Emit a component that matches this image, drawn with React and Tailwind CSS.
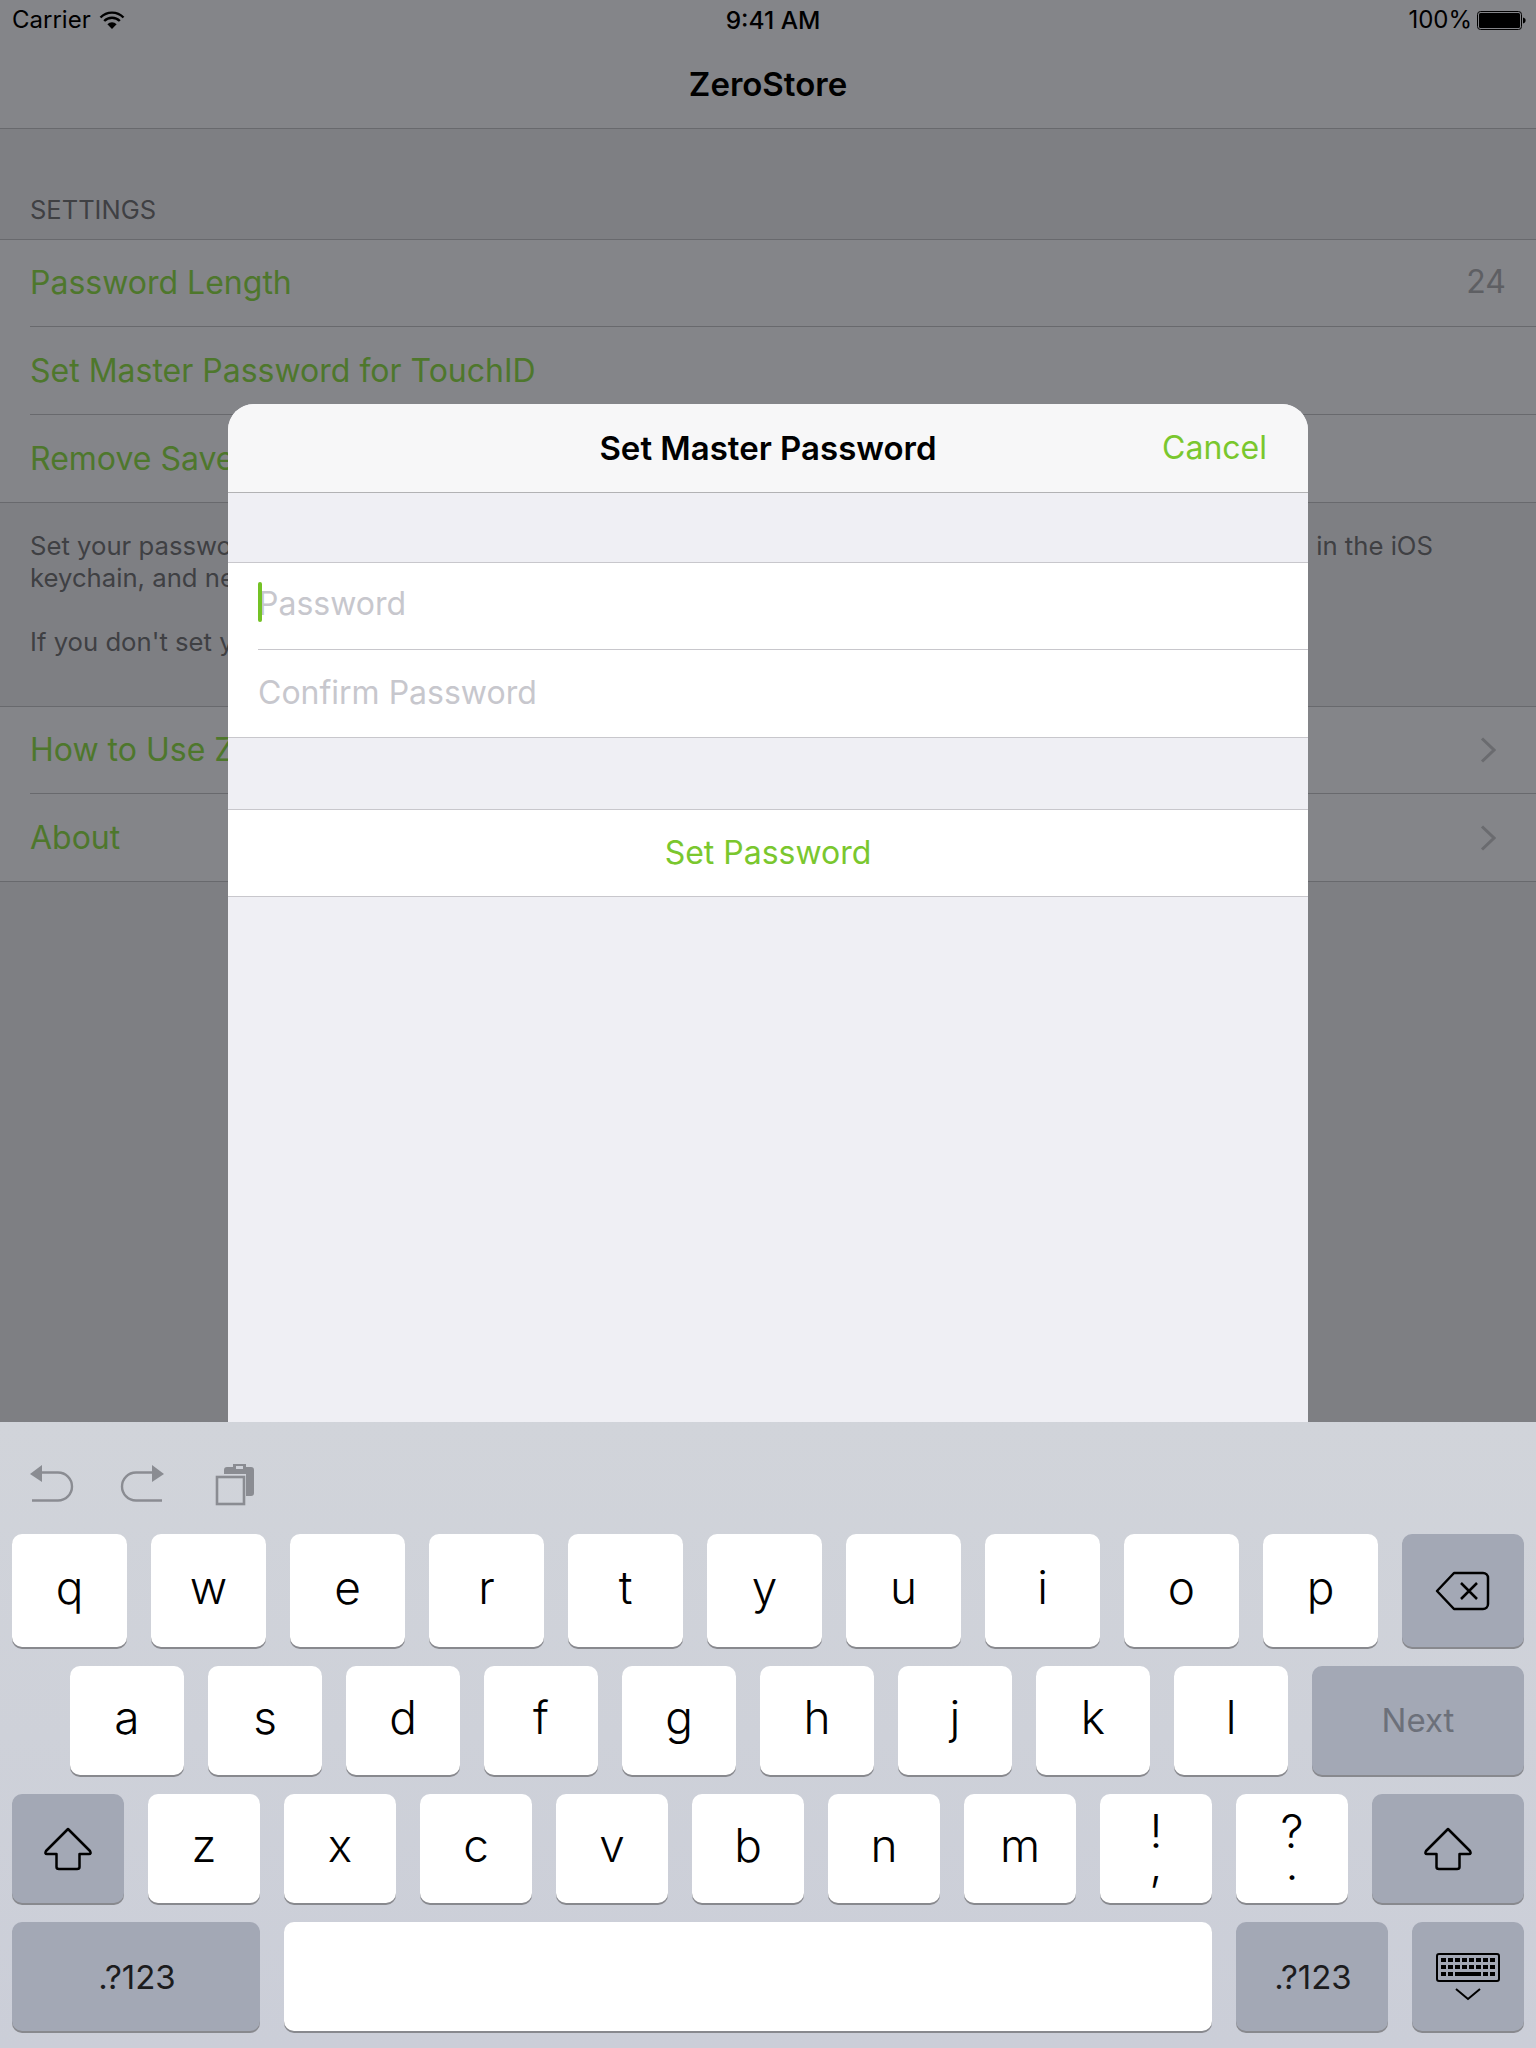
import React from "react";

const font = { fontFamily: "Inter, sans-serif" };

function Wifi() {
  return (
    <svg width="26" height="18" viewBox="0 0 26 18" fill="none" stroke="#000">
      <path d="M1.5 6.5A16 16 0 0 1 24.5 6.5" strokeWidth="2.4" />
      <path d="M5.2 10A11 11 0 0 1 20.8 10" strokeWidth="2.4" />
      <path d="M13 18L8.4 13.2A6.6 6.6 0 0 1 17.6 13.2Z" fill="#000" stroke="none" />
    </svg>
  );
}

function Battery() {
  return (
    <svg width="49" height="19" viewBox="0 0 49 19">
      <rect x="0.5" y="0.5" width="44" height="18" rx="3" fill="none" stroke="#000" />
      <rect x="2" y="2" width="41" height="15" rx="1.5" fill="#000" />
      <path d="M46 6.5c1.6.3 2.6 1.5 2.6 3s-1 2.700-2.600 3z" fill="#000" />
    </svg>
  );
}

function Chevron() {
  return (
    <svg width="16" height="26" viewBox="0 0 16 26" fill="none" stroke="#6a6b6f" strokeWidth="3">
      <path d="M2 1.500L14 13L2 24.500" />
    </svg>
  );
}

function Row({ label, value, chevron, last, first, tall }) {
  return (
    <div className={`pl-[30px] bg-[#848589] ${first ? "border-t border-[#68696d]" : ""} ${last ? "border-b border-[#68696d]" : ""}`}>
      <div className={`${tall ? "h-[88px]" : "h-[87px]"} flex items-center justify-between ${chevron ? "pr-[40px]" : "pr-[30px]"} ${last ? "" : "border-b border-[#68696d]"}`}>
        <span className="text-[32px] text-[#4e772c] whitespace-nowrap">{label}</span>
        {value && <span className="text-[32px] text-[#5e5f63] mb-[2px]">{value}</span>}
        {chevron && <Chevron />}
      </div>
    </div>
  );
}

function Key({ w, grow, dark, h, children }) {
  return (
    <div
      className={`flex items-center justify-center rounded-[10px] shadow-[0_2px_0_#88898e] ${dark ? "bg-[#a3a8b5]" : "bg-white"} ${grow ? "flex-1" : ""} ${h}`}
      style={w ? { width: w } : undefined}
    >
      {children}
    </div>
  );
}

function Letter({ children }) {
  return <span className="text-[46px] font-light text-black leading-none pb-[7px]">{children}</span>;
}

function Stacked({ children }) {
  return <div className="whitespace-pre text-center text-[46px] font-light leading-[32px] text-black pb-[4px]">{children}</div>;
}

function UndoIcon() {
  return (
    <svg width="46" height="42" viewBox="0 0 46 42" fill="none">
      <path d="M2 12L14 3V20Z" fill="#8a8c92" />
      <path d="M14 10.500H30A14 14 0 0 1 30 38.500H4" stroke="#8a8c92" strokeWidth="2.400" />
    </svg>
  );
}

function RedoIcon() {
  return (
    <svg width="46" height="42" viewBox="0 0 46 42" fill="none">
      <path d="M44 12L32 3V20Z" fill="#8a8c92" />
      <path d="M32 10.500H16A14 14 0 0 0 16 38.500H42" stroke="#8a8c92" strokeWidth="2.400" />
    </svg>
  );
}

function PasteIcon() {
  return (
    <svg width="42" height="44" viewBox="0 0 42 44" fill="none">
      <path d="M13 5H37a3 3 0 0 1 3 3V31a3 3 0 0 1-3 3H32V12H10V8a3 3 0 0 1 3-3Z" fill="#8a8c92" />
      <rect x="19" y="2" width="13" height="7" fill="#8a8c92" />
      <rect x="22" y="4" width="7" height="3" fill="#cfd2d9" />
      <rect x="3" y="15" width="27" height="27" stroke="#8a8c92" strokeWidth="2.600" />
    </svg>
  );
}

function DeleteIcon() {
  return (
    <svg width="58" height="44" viewBox="0 0 58 44" fill="none" stroke="#000" strokeWidth="2.500" strokeLinejoin="round">
      <path d="M3 22L20 4H49a5 5 0 0 1 5 5V35a5 5 0 0 1-5 5H20Z" />
      <path d="M27 14L43 30M43 14L27 30" />
    </svg>
  );
}

function ShiftIcon() {
  return (
    <svg width="48" height="45" viewBox="0 0 48 45" fill="none" stroke="#000" strokeWidth="2.500" strokeLinejoin="round">
      <path d="M24 3L46 25Q47.500 28 45 28H35.500V41Q35.500 43 33 43H15Q12.500 43 12.500 41V28H3Q.5 28 2 25Z" />
    </svg>
  );
}

function KeyboardIcon() {
  let cols = [5, 12, 19, 26, 33, 40, 47, 54];
  return (
    <svg width="64" height="48" viewBox="0 0 64 48" fill="none">
      <rect x="1" y="1" width="62" height="27" rx="2" stroke="#000" strokeWidth="2" />
      {cols.map((x) => (
        <rect key={x} x={x} y="5" width="5" height="4" fill="#000" />
      ))}
      {cols.map((x) => (
        <rect key={x} x={x} y="12" width="5" height="4" fill="#000" />
      ))}
      {[5, 12, 47, 54].map((x) => (
        <rect key={x} x={x} y="19" width="5" height="4" fill="#000" />
      ))}
      <rect x="19" y="19" width="26" height="4" fill="#000" />
      <path d="M20 36L32 46L44 36" stroke="#000" strokeWidth="2" />
    </svg>
  );
}

export default function App() {
  let row1 = ["q", "w", "e", "r", "t", "y", "u", "i", "o", "p"];
  let row2 = ["a", "s", "d", "f", "g", "h", "j", "k", "l"];
  let row3 = ["z", "x", "c", "v", "b", "n", "m"];

  return (
    <div className="relative w-[1536px] h-[2048px] flex flex-col overflow-hidden bg-[#7e7f83]" style={font}>
      <div className="h-[1422px] flex flex-col">
        {/* nav */}
        <div className="h-[129px] bg-[#848589] border-b border-[#68696d] flex flex-col shrink-0">
          <div className="h-[40px] flex items-center pl-3 pr-[10px] text-[24px] text-black">
            <div className="flex-1 flex items-center gap-[8px]">
              <span>Carrier</span>
              <Wifi />
            </div>
            <span className="font-medium ml-2 text-[24.5px]">9:41 AM</span>
            <div className="flex-1 flex items-center justify-end gap-[5px]">
              <span>100%</span>
              <Battery />
            </div>
          </div>
          <div className="flex-1 flex items-center justify-center pt-[1px] text-[33px] font-semibold text-black">ZeroStore</div>
        </div>

        <div className="h-[110px] pl-[30px] pb-[10px] flex items-end text-[25.5px] text-[#3f4043]">SETTINGS</div>
        <Row first label="Password Length" value="24" />
        <Row tall label="Set Master Password for TouchID" />
        <Row last label="Remove Saved Password" />

        <div className="h-[203px] px-[30px] pt-[27px] text-[25.7px] leading-[32px] text-[#3f4043]">
          <div className="flex justify-between pr-[73px]">
            <span>Set your password</span>
            <span>in the iOS</span>
          </div>
          <div>keychain, and never</div>
          <div className="mt-[32px]">If you don't set your</div>
        </div>

        <Row first label="How to Use ZeroStore" chevron />
        <Row last label="About" chevron />
      </div>

      {/* keyboard */}
      <div className="flex-1 bg-linear-to-b from-[#d1d4da] to-[#cbced8] flex flex-col">
        <div className="h-[112px] pl-[28px] pt-[40px] flex items-start">
          <UndoIcon />
          <div className="ml-[46px]"><RedoIcon /></div>
          <div className="ml-[48px]"><PasteIcon /></div>
        </div>
        <div className="flex flex-col gap-[19px] px-3">
          <div className="flex gap-6">
            {row1.map((k) => (
              <Key key={k} grow h="h-[113px]"><Letter>{k}</Letter></Key>
            ))}
            <Key w={122} dark h="h-[113px]"><DeleteIcon /></Key>
          </div>
          <div className="flex gap-6 pl-[58px]">
            {row2.map((k) => (
              <Key key={k} w={114} h="h-[109px]"><Letter>{k}</Letter></Key>
            ))}
            <Key w={212} dark h="h-[109px]"><span className="text-[33px] text-[#6c707a]">Next</span></Key>
          </div>
          <div className="flex gap-6">
            <Key w={112} dark h="h-[109px]"><ShiftIcon /></Key>
            {row3.map((k) => (
              <Key key={k} w={112} h="h-[109px]"><Letter>{k}</Letter></Key>
            ))}
            <Key w={112} h="h-[109px]"><Stacked>{"!\n,"}</Stacked></Key>
            <Key w={112} h="h-[109px]"><Stacked>{"?\n."}</Stacked></Key>
            <Key w={152} dark h="h-[109px]"><ShiftIcon /></Key>
          </div>
          <div className="flex gap-6">
            <Key w={248} dark h="h-[109px]"><span className="text-[33px] text-[#1c1c1e] pt-[2px] pl-[2px]">.?123</span></Key>
            <Key grow h="h-[109px]" />
            <Key w={152} dark h="h-[109px]"><span className="text-[33px] text-[#1c1c1e] pt-[2px] pl-[2px]">.?123</span></Key>
            <Key w={112} dark h="h-[109px]"><KeyboardIcon /></Key>
          </div>
        </div>
      </div>

      {/* modal sheet */}
      <div className="absolute left-[228px] top-[404px] w-[1080px] h-[1018px] bg-[#efeff4] rounded-t-[26px] overflow-hidden">
        <div className="relative h-[89px] bg-[#f7f7f8] border-b border-[#b2b2b4] flex items-center justify-center">
          <span className="text-[33px] font-semibold text-black pt-[1px]">Set Master Password</span>
          <span className="absolute right-[41px] text-[32px] text-[#7ac72e]">Cancel</span>
        </div>
        <div className="mt-[69px] bg-white border-y border-[#c8c7cc]">
          <div className="ml-[30px] h-[87px] border-b border-[#c8c7cc] flex items-center relative">
            <span className="text-[32px] text-[#c7c7cd] pb-[5px]">Password</span>
            <div className="absolute left-0 top-[19px] w-[4px] h-[40px] rounded-full bg-[#74c225]" />
          </div>
          <div className="ml-[30px] h-[87px] flex items-center">
            <span className="text-[32px] text-[#c7c7cd] pb-[1px]">Confirm Password</span>
          </div>
        </div>
        <div className="mt-[71px] h-[88px] bg-white border-y border-[#c8c7cc] flex items-center justify-center">
          <span className="text-[32px] text-[#7ac72e] pb-[1px]">Set Password</span>
        </div>
      </div>
    </div>
  );
}
